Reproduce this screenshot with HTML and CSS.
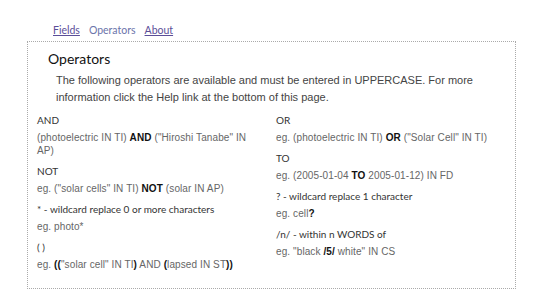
FILE: index.html
```html
<!DOCTYPE html>
<html lang="en">
<head>
  <meta charset="UTF-8">
  <title>Operators</title>
  <link rel="stylesheet" href="styles.css">
</head>
<body>
  <div class="tabs">
    <a href="#" class="tab">Fields</a>
    <span class="tab current">Operators</span>
    <a href="#" class="tab">About</a>
  </div>

  <div class="box">
    <h2>Operators</h2>
    <p class="intro">The following operators are available and must be entered in UPPERCASE. For more information click the Help link at the bottom of this page.</p>

    <div class="columns">
      <div class="col">
        <div class="op">
          <div class="label">AND</div>
          <div class="example">(photoelectric IN TI) <b>AND</b> ("Hiroshi Tanabe" IN AP)</div>
        </div>
        <div class="op">
          <div class="label">NOT</div>
          <div class="example">eg. ("solar cells" IN TI) <b>NOT</b> (solar IN AP)</div>
        </div>
        <div class="op">
          <div class="label">* - wildcard replace 0 or more characters</div>
          <div class="example">eg. photo*</div>
        </div>
        <div class="op">
          <div class="label">( )</div>
          <div class="example">eg. <b>((</b>"solar cell" IN TI<b>)</b> AND <b>(</b>lapsed IN ST<b>))</b></div>
        </div>
      </div>

      <div class="col">
        <div class="op">
          <div class="label">OR</div>
          <div class="example">eg. (photoelectric IN TI) <b>OR</b> ("Solar Cell" IN TI)</div>
        </div>
        <div class="op">
          <div class="label">TO</div>
          <div class="example">eg. (2005-01-04 <b>TO</b> 2005-01-12) IN FD</div>
        </div>
        <div class="op">
          <div class="label">? - wildcard replace 1 character</div>
          <div class="example">eg. cell<b>?</b></div>
        </div>
        <div class="op">
          <div class="label">/n/ - within n WORDS of</div>
          <div class="example">eg. "black <b>/5/</b> white" IN CS</div>
        </div>
      </div>
    </div>
  </div>
</body>
</html>
```

FILE: styles.css
```css
body {
  font-family: "Liberation Sans", Arial, sans-serif;
  background-color: #fff;
  color: #333;
  margin: 0;
  padding: 0;
}
.tabs {
  display: flex;
  gap: 9px;
  padding: 23px 0 0 53px;
  height: 18px;
  font-family: Lato, "Open Sans", sans-serif;
  font-size: 10.5px;
  line-height: 14px;
}
.tab {
  color: #5b4e98;
}
.tab.current {
  color: #6b74aa;
}
.box {
  width: 469px;
  margin-left: 27px;
  border: 1px dotted #aaa;
  padding: 7px 9px 10px 9px;
  min-height: 220px;
}
h2 {
  font-family: Lato, "Open Sans", sans-serif;
  font-size: 14px;
  font-weight: normal;
  color: #111;
  margin: 0 0 0 11px;
  line-height: 20px;
}
.intro {
  margin: 3px 0 7px 19px;
  font-size: 11px;
  line-height: 17px;
  color: #444;
}
.columns {
  display: flex;
  gap: 9px;
}
.col {
  width: 230px;
}
.col:first-child {
  width: 225px;
  margin-right: 5px;
}
.op {
  margin-bottom: 7px;
}
.label {
  font-family: Lato, "Open Sans", sans-serif;
  font-size: 10px;
  line-height: 15px;
  color: #333;
}
.example {
  margin-top: 3px;
  font-size: 10px;
  letter-spacing: 0.1px;
  line-height: 13px;
  color: #666;
}
.example b {
  color: #111;
}
```
